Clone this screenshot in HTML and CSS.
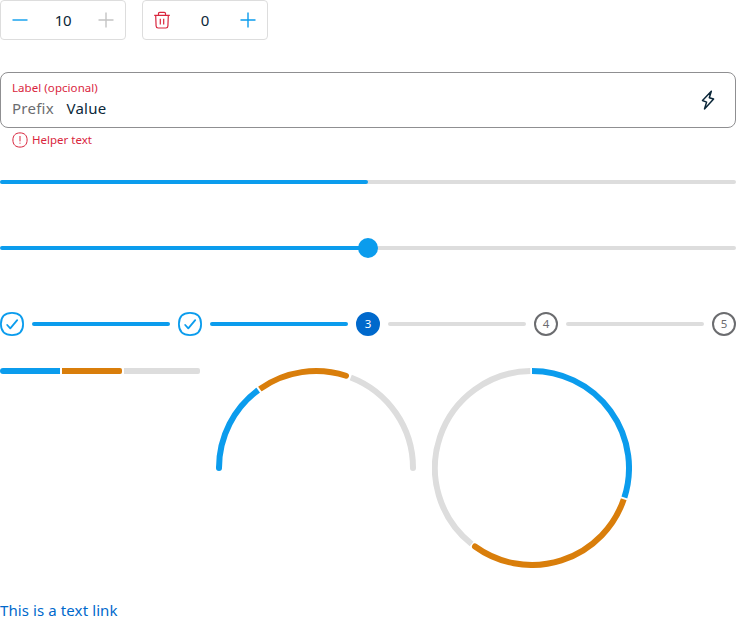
FILE: index.html
```html
<!DOCTYPE html>
<html lang="en">
<head>
<meta charset="utf-8">
<title>Components</title>
<link rel="stylesheet" href="styles.css">
</head>
<body>
<main class="page">
  <div class="counters">
    <div class="counter">
      <svg class="icon blue" viewBox="0 0 24 24"><path d="M4.5 12h15"/></svg>
      <span class="count">10</span>
      <svg class="icon disabled" viewBox="0 0 24 24"><path d="M4.5 12h15M12 4.500v15"/></svg>
    </div>
    <div class="counter">
      <svg class="icon red" viewBox="0 0 24 24"><path d="M4.200 7.400h15.600M8.500 7V5.600Q8.500 4.400 9.700 4.400H14.300Q15.500 4.400 15.500 5.600V7M5.700 7.800l.4 10.200q.1 2 2 2h7.800q1.900 0 2-2l.4-10.200M10.300 10.700v5.800M13.700 10.700v5.800"/></svg>
      <span class="count">0</span>
      <svg class="icon blue" viewBox="0 0 24 24"><path d="M4.500 12h15M12 4.500v15"/></svg>
    </div>
  </div>

  <div class="field">
    <div class="field-body">
      <span class="label">Label (opcional)</span>
      <div class="entry"><span class="prefix">Prefix</span><span class="value">Value</span></div>
    </div>
    <svg class="bolt" viewBox="0 0 24 24"><path d="M15.300 3.300L6.500 12.500L10.600 14.100L8.500 20.900L17.600 11L13.300 9.700Z"/></svg>
  </div>
  <div class="helper">
    <svg class="alert" viewBox="0 0 16 16"><path d="M8 .9C12.500 .9 15.100 3.500 15.100 8S12.500 15.100 8 15.100S.9 12.500 .9 8S3.500 .9 8 .9ZM8 4v5.400M8 10.700v1"/></svg>
    <span class="helper-text">Helper text</span>
  </div>

  <div class="progress"><div class="fill"></div></div>

  <div class="slider"><div class="track done"></div><div class="thumb"></div><div class="track rest"></div></div>

  <div class="stepper">
    <svg class="check" viewBox="0 0 24 24"><path d="M12 .9C19.200 .9 23.100 4.800 23.100 12S19.200 23.100 12 23.100S.9 19.200 .9 12S4.800 .9 12 .9Z"/><path d="M7.200 13l3.100 3.400l6.900-8.200"/></svg>
    <div class="line done"></div>
    <svg class="check" viewBox="0 0 24 24"><path d="M12 .9C19.200 .9 23.100 4.800 23.100 12S19.200 23.100 12 23.100S.9 19.200 .9 12S4.800 .9 12 .9Z"/><path d="M7.200 13l3.100 3.400l6.900-8.200"/></svg>
    <div class="line done"></div>
    <div class="step current">3</div>
    <div class="line"></div>
    <div class="step">4</div>
    <div class="line"></div>
    <div class="step">5</div>
  </div>

  <div class="meters">
    <div class="bar"><div class="seg first"></div><div class="seg second"></div><div class="seg last"></div></div>
    <svg class="half" viewBox="0 0 200 103">
      <path class="arc grey" d="M134.760 9.440A97 97 0 0 1 197 100"/>
      <circle class="dot-grey" cx="197" cy="100" r="3"/>
      <path class="arc orange round" d="M44.500 20.600A97 97 0 0 1 130 7.750"/>
      <path class="arc blue-arc" d="M3 100A97 97 0 0 1 42.980 21.520"/>
      <circle class="dot-blue" cx="3" cy="100" r="3"/>
      <path class="gap" d="M40.800 18.500L45.500 25"/>
    </svg>
    <svg class="ring" viewBox="0 0 200 200">
      <path class="arc grey" d="M39.620 176.010A97 97 0 0 1 98.300 3.010"/>
      <path class="arc orange round" d="M191.800 131.100A97 97 0 0 1 43 178.500"/>
      <path class="arc blue-arc" d="M100 3A97 97 0 0 1 192.250 129.970"/>
      <path class="gap" d="M187.500 128.900L196.500 131.800"/>
    </svg>
  </div>

  <a class="link">This is a text link</a>
</main>
</body>
</html>
```
FILE: styles.css
```css
* { box-sizing: border-box; }
body { margin: 0; background: #fff; color: #0b2739; font-family: "Noto Sans", sans-serif; overflow: hidden; }
svg { display: block; flex: none; fill: none; }
.page { display: flex; flex-direction: column; width: 736px; height: 618px; }

.counters { display: flex; gap: 16px; }
.counter { width: 126px; height: 40px; padding: 0 9px; border: 1px solid #ddd; border-radius: 4px; display: flex; align-items: center; justify-content: space-between; }
.icon { width: 24px; height: 24px; margin: 0 -2px; stroke-width: 1.4; }
.icon.blue { stroke: #0b9ced; }
.icon.disabled { stroke: #c4c4c4; }
.icon.red { stroke: #d9263e; stroke-width: 1.2; }
.count { font-size: 15px; line-height: 24px; letter-spacing: -.3px; }

.field { height: 56px; margin-top: 32px; padding: 0 15px 0 11px; border: 1px solid #8f8f91; border-radius: 8px; display: flex; align-items: center; justify-content: space-between; }
.label { display: block; color: #d9263e; font-size: 11.500px; line-height: 16px; letter-spacing: .06px; }
.entry { display: flex; gap: 12px; font-size: 15px; line-height: 24px; }
.prefix { width: 42.500px; color: #6b6c6f; letter-spacing: .25px; }
.value { letter-spacing: .25px; }
.bolt { width: 24px; height: 24px; stroke: #0b2739; stroke-width: 1.5; stroke-linejoin: round; }
.helper { display: flex; align-items: center; gap: 4px; height: 16px; margin: 4px 0 0 12px; color: #d9263e; }
.helper-text { font-size: 11.500px; line-height: 16px; }
.alert { width: 16px; height: 16px; stroke: #d9263e; stroke-width: 1; }

.progress { height: 4px; margin-top: 32px; border-radius: 2px; background: #ddd; }
.fill { width: 50%; height: 4px; border-radius: 2px; background: #0b9ced; }
.slider { display: flex; align-items: center; height: 20px; margin-top: 54px; }
.track { flex: 1; height: 4px; }
.track.done { background: #0b9ced; border-radius: 2px 0 0 2px; margin-right: -1px; }
.track.rest { background: #ddd; border-radius: 0 2px 2px 0; margin-left: -1px; }
.thumb { position: relative; width: 20px; height: 20px; border-radius: 50%; background: #0b9ced; }

.stepper { display: flex; align-items: center; gap: 8px; height: 24px; margin-top: 54px; }
.check { width: 24px; height: 24px; stroke: #0b9ced; stroke-width: 1.8; stroke-linecap: round; stroke-linejoin: round; }
.line { flex: 1; height: 4px; border-radius: 2px; background: #ddd; }
.line.done { background: #0b9ced; }
.step { width: 24px; height: 24px; border: 2px solid #6b6c6f; border-radius: 50%; display: flex; align-items: center; justify-content: center; color: #6b6c6f; font-size: 11.500px; line-height: 16px; }
.step.current { background: #0069cc; border-color: #0069cc; color: #fff; }

.meters { display: flex; gap: 16px; margin-top: 32px; height: 200px; }
.bar { display: flex; gap: 2px; width: 200px; height: 6px; }
.seg { height: 6px; width: 60px; }
.seg.first { background: #0b9ced; border-radius: 3px 0 0 3px; }
.seg.second { background: #d97e0b; border-radius: 0 2px 2px 0; }
.seg.last { flex: 1; background: #ddd; border-radius: 0 2px 2px 0; }
.half { width: 200px; height: 103px; }
.ring { width: 200px; height: 200px; }
.arc { stroke-width: 6; }
.grey { stroke: #ddd; }
.orange { stroke: #d97e0b; }
.round { stroke-linecap: round; }
.blue-arc { stroke: #0b9ced; }
.gap { stroke: #fff; stroke-width: 2; stroke-linecap: square; }
.dot-grey { fill: #ddd; }
.dot-blue { fill: #0b9ced; }

.link { margin-top: 34px; height: 16px; color: #0069cc; font-size: 15px; line-height: 17px; letter-spacing: .1px; white-space: nowrap; }
```
